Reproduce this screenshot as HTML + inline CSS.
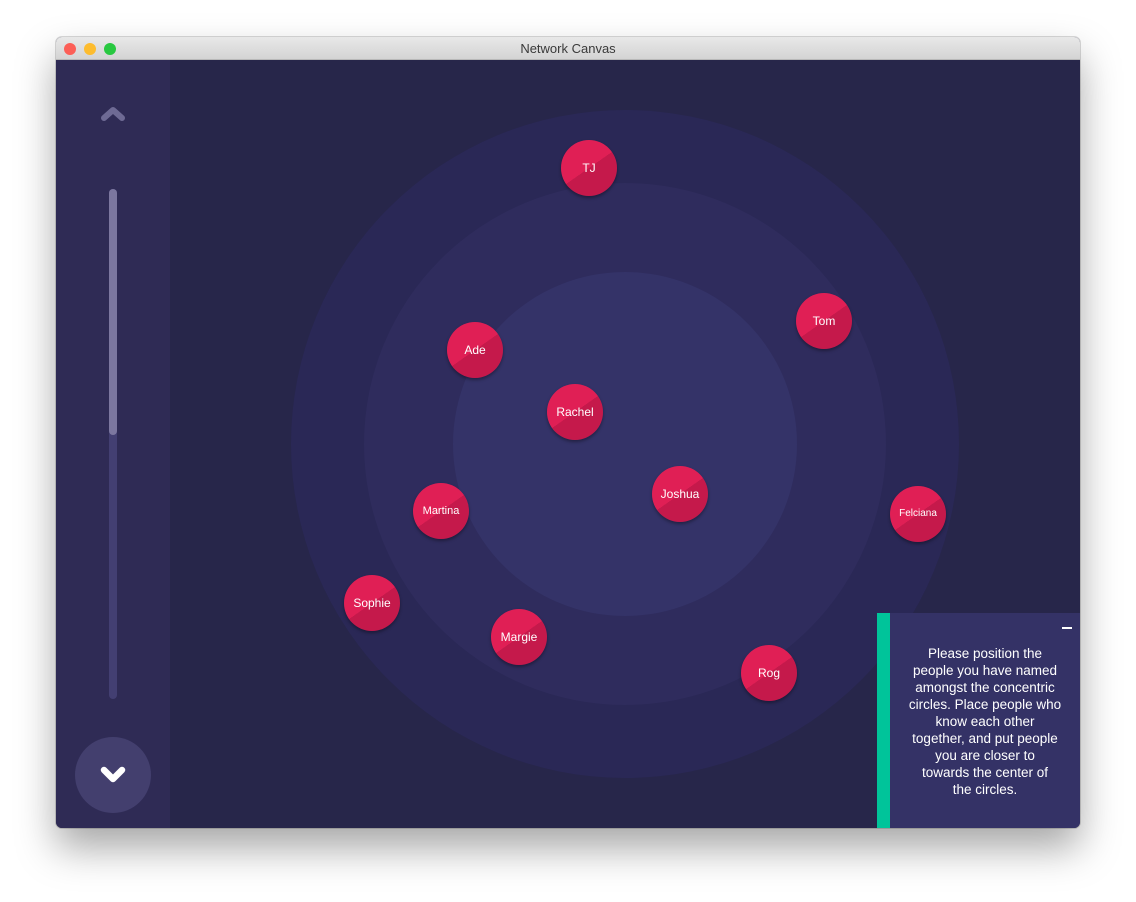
<!DOCTYPE html>
<html><head><style>
*{margin:0;padding:0;box-sizing:border-box}
body{width:1136px;height:902px;background:#fff;position:relative;overflow:hidden;font-family:"Liberation Sans",sans-serif}
.win{position:absolute;left:56px;top:37px;width:1024px;height:791px;border-radius:6px;overflow:hidden;box-shadow:0 20px 40px rgba(0,0,0,.35),0 0 0 1px rgba(0,0,0,.15);background:#27264a}
.title{position:absolute;left:0;top:0;width:100%;height:23px;background:linear-gradient(#e8e8e8,#d4d4d4);border-bottom:1px solid #b8b8b8;text-align:center;font-size:13px;line-height:23px;color:#3a3a3a}
.dot{position:absolute;top:6px;width:12px;height:12px;border-radius:50%}
.side{position:absolute;left:0;top:23px;width:114px;height:768px;background:#2f2b55}
.c{position:absolute;border-radius:50%}
.n{position:absolute;width:56px;height:56px;border-radius:50%;background:linear-gradient(145deg,#e01f55 0%,#e01f55 50%,#c5194b 50%);box-shadow:0 2px 3px rgba(0,0,0,.35);color:#fff;font-size:12px;text-align:center;line-height:56px}
</style></head><body>
<div class="win">
<div class="title">Network Canvas
<div class="dot" style="left:8px;background:#fc5f57"></div>
<div class="dot" style="left:28px;background:#fdbc2e"></div>
<div class="dot" style="left:48px;background:#28c840"></div>
</div>
<div class="side">
<svg style="position:absolute;left:44px;top:45px" width="26" height="18"><path d="M4 13 L13 5 L22 13" stroke="#6e6a94" stroke-width="6" fill="none" stroke-linecap="round" stroke-linejoin="round"/></svg>
<div style="position:absolute;left:53px;top:129px;width:8px;height:510px;border-radius:4px;background:#433f72"></div>
<div style="position:absolute;left:53px;top:129px;width:8px;height:246px;border-radius:4px;background:#7c779f"></div>
<div style="position:absolute;left:19px;top:677px;width:76px;height:76px;border-radius:50%;background:#433f6e"></div>
<svg style="position:absolute;left:43px;top:704px" width="28" height="22"><path d="M5 6 L14 15 L23 6" stroke="#fff" stroke-width="6.5" fill="none" stroke-linecap="round" stroke-linejoin="round"/></svg>
</div>
<div class="c" style="left:235px;top:73px;width:668px;height:668px;background:#2a2856"></div>
<div class="c" style="left:308px;top:146px;width:522px;height:522px;background:#2f2c5d"></div>
<div class="c" style="left:397px;top:235px;width:344px;height:344px;background:#343368"></div>
<div class="n" style="left:505px;top:103px">TJ</div>
<div class="n" style="left:740px;top:256px">Tom</div>
<div class="n" style="left:391px;top:285px">Ade</div>
<div class="n" style="left:491px;top:347px">Rachel</div>
<div class="n" style="left:596px;top:429px">Joshua</div>
<div class="n" style="left:357px;top:446px;font-size:11px">Martina</div>
<div class="n" style="left:834px;top:449px;font-size:10px">Felciana</div>
<div class="n" style="left:288px;top:538px">Sophie</div>
<div class="n" style="left:435px;top:572px">Margie</div>
<div class="n" style="left:685px;top:608px">Rog</div>
<div style="position:absolute;left:821px;top:576px;width:203px;height:215px;background:#343266">
<div style="position:absolute;left:0;top:0;width:13px;height:215px;background:#00c49a"></div>
<div style="position:absolute;right:8px;top:14px;width:10px;height:1.5px;background:#fff"></div>
<div style="position:absolute;left:13px;top:32px;width:190px;color:#fff;font-size:13.5px;line-height:17px;text-align:center;white-space:nowrap">Please position the<br>people you have named<br>amongst the concentric<br>circles. Place people who<br>know each other<br>together, and put people<br>you are closer to<br>towards the center of<br>the circles.</div>
</div>
</div>
</body></html>
